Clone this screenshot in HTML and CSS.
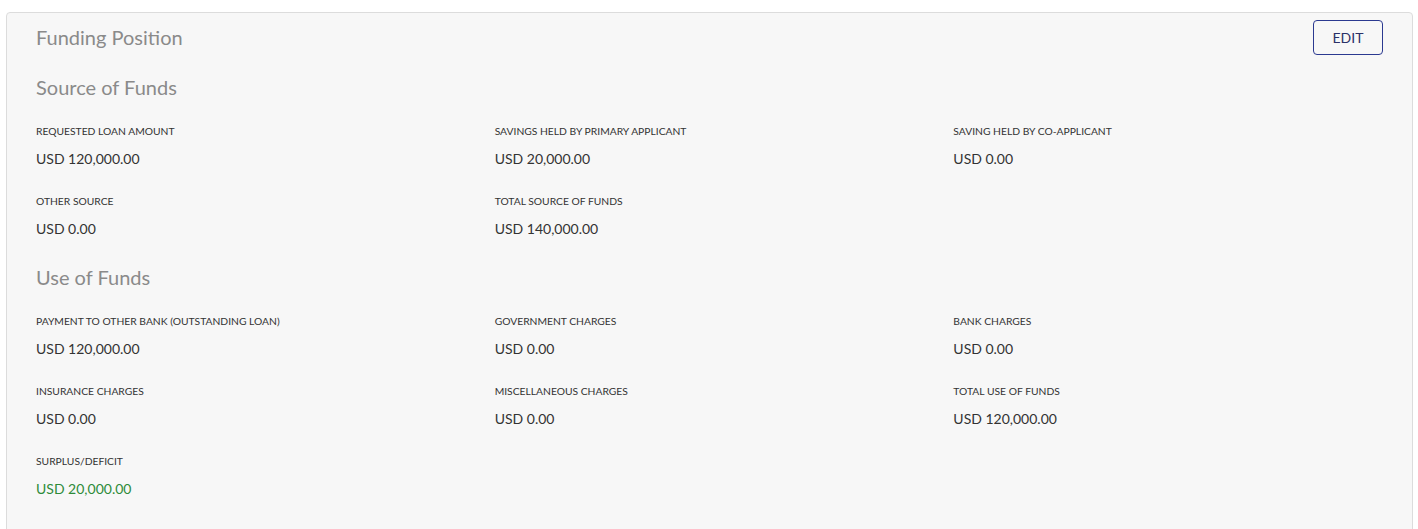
FILE: index.html
```html
<!DOCTYPE html>
<html lang="en">
<head>
<meta charset="utf-8">
<title>Funding Position</title>
<link rel="stylesheet" href="styles.css">
</head>
<body>
<section class="card">
  <header class="card-header">
    <h2 class="card-title">Funding Position</h2>
    <button class="btn-edit" type="button">EDIT</button>
  </header>

  <h3 class="section-title section-first">Source of Funds</h3>
  <div class="grid">
    <div class="field"><div class="label">REQUESTED LOAN AMOUNT</div><div class="value">USD 120,000.00</div></div>
    <div class="field"><div class="label">SAVINGS HELD BY PRIMARY APPLICANT</div><div class="value">USD 20,000.00</div></div>
    <div class="field"><div class="label">SAVING HELD BY CO-APPLICANT</div><div class="value">USD 0.00</div></div>
    <div class="field"><div class="label">OTHER SOURCE</div><div class="value">USD 0.00</div></div>
    <div class="field"><div class="label">TOTAL SOURCE OF FUNDS</div><div class="value">USD 140,000.00</div></div>
  </div>

  <h3 class="section-title">Use of Funds</h3>
  <div class="grid">
    <div class="field"><div class="label">PAYMENT TO OTHER BANK (OUTSTANDING LOAN)</div><div class="value">USD 120,000.00</div></div>
    <div class="field"><div class="label">GOVERNMENT CHARGES</div><div class="value">USD 0.00</div></div>
    <div class="field"><div class="label">BANK CHARGES</div><div class="value">USD 0.00</div></div>
    <div class="field"><div class="label">INSURANCE CHARGES</div><div class="value">USD 0.00</div></div>
    <div class="field"><div class="label">MISCELLANEOUS CHARGES</div><div class="value">USD 0.00</div></div>
    <div class="field"><div class="label">TOTAL USE OF FUNDS</div><div class="value">USD 120,000.00</div></div>
    <div class="field"><div class="label">SURPLUS/DEFICIT</div><div class="value value-positive">USD 20,000.00</div></div>
  </div>
</section>
</body>
</html>
```

FILE: styles.css
```css
html, body {
  margin: 0;
  padding: 0;
  background: #ffffff;
}
body {
  padding: 12px 5px 0 6px;
  font-family: "Lato", "Liberation Sans", sans-serif;
  color: #333333;
}
.card {
  background: #f7f7f7;
  border: 1px solid #dcdcdc;
  border-radius: 4px;
  padding: 7px 29px 40px 29px;
  min-height: 560px;
  box-sizing: border-box;
}
.card-header {
  display: flex;
  justify-content: space-between;
  align-items: flex-start;
}
.card-title {
  margin: 5px 0 0 0;
  font-size: 20px;
  font-weight: 400;
  line-height: 24px;
  color: #8a8a8a;
}
.btn-edit {
  width: 70px;
  height: 35px;
  border: 1px solid #2b3990;
  border-radius: 4px;
  background: transparent;
  font-family: inherit;
  font-size: 14px;
  color: #2b3168;
  padding: 0;
  margin: 0;
}
.section-title {
  margin: 0 0 25px 0;
  font-size: 20px;
  font-weight: 400;
  line-height: 24px;
  color: #8a8a8a;
}
.section-first {
  margin-top: 20px;
}
.grid {
  display: grid;
  grid-template-columns: repeat(3, 1fr);
  margin-right: -29px;
  row-gap: 26px;
  margin-bottom: 27px;
}
.label {
  font-size: 10.3px;
  line-height: 14px;
  color: #333333;
}
.value {
  margin-top: 12px;
  font-size: 14px;
  line-height: 18px;
  color: #333333;
}
.value-positive {
  color: #2e8b3a;
}
```
